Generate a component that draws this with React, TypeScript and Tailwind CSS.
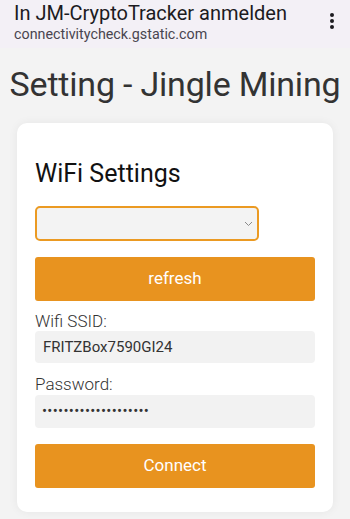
import React from 'react';

const font = { fontFamily: 'Roboto, "Noto Sans", sans-serif' };

export default function App() {
  return (
    <div className="w-[350px] h-[519px] overflow-hidden bg-[#f3f3f3]" style={font}>
      {/* Captive portal top bar */}
      <div className="h-[48px] bg-[#f3f0f6] flex items-start justify-between pl-[14px] pr-[14px]">
        <div className="pt-[1px]">
          <div className="text-[20px] leading-[24px] text-[#1c1b1f]">In JM-CryptoTracker anmelden</div>
          <div className="text-[14.3px] leading-[18px] text-[#49454f]">connectivitycheck.gstatic.com</div>
        </div>
        <div className="flex flex-col gap-[2px] pt-[13px] pr-[2px]">
          <span className="block w-[4px] h-[4px] rounded-full bg-[#1c1b1f]" />
          <span className="block w-[4px] h-[4px] rounded-full bg-[#1c1b1f]" />
          <span className="block w-[4px] h-[4px] rounded-full bg-[#1c1b1f]" />
        </div>
      </div>

      <h1 className="mt-[16px] text-center text-[34px] leading-[40px] text-[#333333] tracking-[-0.2px]">
        Setting - Jingle Mining
      </h1>

      <div className="mx-[17px] mt-[19px] bg-white rounded-[10px] shadow-[0_0_10px_rgba(0,0,0,0.06)] px-[18px] pt-[37px] pb-[24px]">
        <h2 className="text-[25px] leading-[28px] text-[#111111]">WiFi Settings</h2>

        <div className="mt-[18px] relative w-[224px] h-[35px] rounded-[5px] border-2 border-[#eb9a22] bg-[#f3f3f3]">
          <svg className="absolute right-[4px] top-[13px]" width="9" height="6" viewBox="0 0 9 6">
            <path d="M1 1l3.5 3.5L8 1" fill="none" stroke="#8a8a8a" strokeWidth="1" />
          </svg>
        </div>

        <button className="mt-[16px] w-full h-[44px] rounded-[3px] bg-[#e8931f] text-white text-[17px]">
          refresh
        </button>

        <div className="mt-[10px] text-[17px] leading-[20px] text-[#333333] font-light">Wifi SSID:</div>
        <div className="h-[32px] rounded-[4px] bg-[#f2f2f2] flex items-center px-[8px] text-[15px] text-[#333333]">
          FRITZBox7590GI24
        </div>

        <div className="mt-[11px] text-[17px] leading-[20px] text-[#333333] font-light">Password:</div>
        <div className="mt-[1px] h-[33px] rounded-[4px] bg-[#f2f2f2] flex items-center px-[7px] text-[15px] tracking-[0.3px] text-[#333333]">
          ••••••••••••••••••••
        </div>

        <button className="mt-[16px] w-full h-[44px] rounded-[3px] bg-[#e8931f] text-white text-[17px]">
          Connect
        </button>
      </div>
    </div>
  );
}
